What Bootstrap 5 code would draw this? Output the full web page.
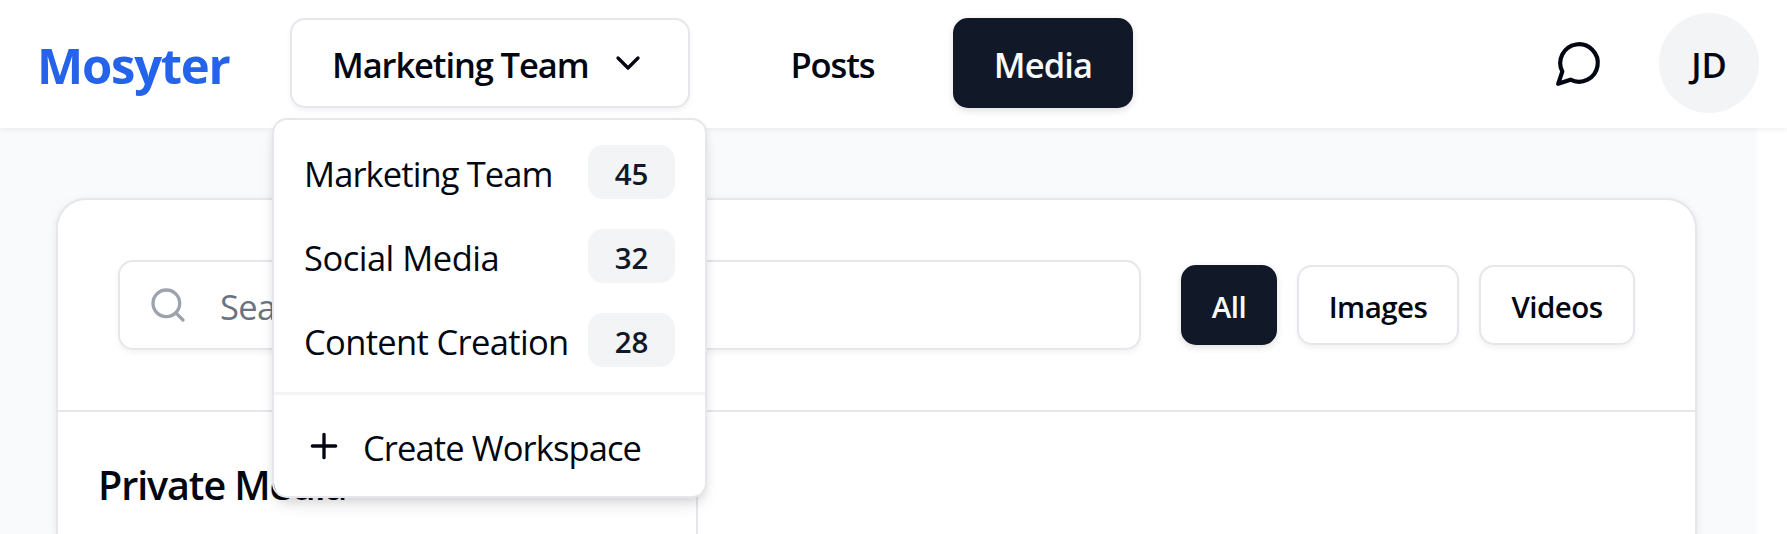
<!DOCTYPE html>
<html lang="en">
<head>
<meta charset="utf-8">
<title>Mosyter</title>
<meta name="viewport" content="width=device-width, initial-scale=1">
<link href="https://cdn.jsdelivr.net/npm/bootstrap@5.3.0/dist/css/bootstrap.min.css" rel="stylesheet">
<style>
  :root { --ink: #030712; --navy: #111827; --line: #e5e7eb; --soft: #f3f4f6; --page: #f9fafb; }
  body { font-family: "Open Sans", "Noto Sans", sans-serif; font-size: 34.5px; line-height: 50px; color: var(--ink); background: #fff; overflow: hidden; height: 534px; }
  svg { fill: none; stroke: currentColor; stroke-width: 2; stroke-linecap: round; stroke-linejoin: round; flex: none; display: block; }
  .topbar { height: 128px; padding: 0 28px 2px 37px; background: #fff; box-shadow: 0 2.5px 5px rgba(0,0,0,.05); position: relative; z-index: 5; }
  .topbar .navbar-brand { font-size: 49px; font-weight: 700; color: #2563eb; width: 253px; margin: 0; padding: 3px 0 0; line-height: 60px; letter-spacing: -1.25px; }
  .ui-btn { --bs-btn-color: var(--ink); --bs-btn-border-color: transparent; --bs-btn-border-width: 2px; --bs-btn-border-radius: 15px; --bs-btn-font-size: 34.5px; --bs-btn-line-height: 50px; --bs-btn-font-weight: 600; --bs-btn-padding-x: 0; --bs-btn-padding-y: 0; height: 90px; display: flex; align-items: center; justify-content: center; white-space: nowrap; letter-spacing: -1.1px; }
  .ui-btn .label { padding-top: 4px; }
  .ui-outline { --bs-btn-bg: #fff; --bs-btn-border-color: var(--line); box-shadow: 0 2.5px 5px rgba(0,0,0,.05); }
  .ui-solid { --bs-btn-bg: var(--navy); --bs-btn-color: #f9fafb; --bs-btn-border-color: var(--navy); box-shadow: 0 2.5px 7px rgba(0,0,0,.12); }
  .ui-small { --bs-btn-font-size: 29.5px; height: 80px; letter-spacing: -.55px; }
  .trigger { width: 400px; justify-content: flex-start; padding-left: 40px; }
  .trigger .label { width: 276px; text-align: left; }
  .posts { width: 163px; margin-left: 61px; }
  .media { width: 180px; margin-left: 39px; letter-spacing: -.9px; }
  .avatar { width: 100px; height: 100px; background: var(--soft); font-weight: 600; margin-left: 55px; padding-top: 3px; }
  .ws-menu { top: 118px; left: 272px; width: 435px; height: 380px; border: 2px solid var(--line); border-radius: 15px; padding: 11px 0 0; font-size: inherit; color: inherit; box-shadow: 0 10px 15px -3px rgba(0,0,0,.1), 0 4px 10px -2px rgba(0,0,0,.1); z-index: 10; }
  .ws-menu .dropdown-item { height: 84px; padding: 0 30px 2px; color: var(--ink); letter-spacing: -.9px; }
  .ws-menu .social { letter-spacing: -.5px; }
  .ws-menu .content-team { letter-spacing: -.65px; }
  .ws-menu .label { padding-top: 3px; }
  .ws-menu .create .label { margin-left: 19px; }
  .ws-menu .dropdown-divider { margin: 9px 0 10px; border-top: 3px solid var(--soft); }
  .count { width: 87px; height: 54px; border-radius: 15px; background: var(--soft); color: var(--navy); font-size: 29.5px; font-weight: 600; line-height: 57px; letter-spacing: 0; }
  .page-area { width: 1757px; height: 406px; background: var(--page); padding: 70px 60px 0 56px; }
  .panel { height: 336px; background: #fff; border: 2px solid var(--line); border-bottom: 0; border-radius: 30px 30px 0 0; box-shadow: 0 2.5px 8px rgba(0,0,0,.08); }
  .tools { height: 212px; border-bottom: 2px solid var(--line); padding: 0 60px; }
  .search { width: 1023px; height: 90px; border: 2px solid var(--line); border-radius: 15px; padding-left: 28px; box-shadow: 0 2.5px 5px rgba(0,0,0,.05); color: #6b7280; margin-right: 40px; letter-spacing: -.7px; }
  .search .label { padding-top: 4px; }
  .search svg { color: #9ca3af; margin-right: 32px; }
  .filters { gap: 20px; }
  .f-all { width: 96px; }
  .f-images { width: 162px; }
  .f-videos { width: 156px; }
  .side { width: 640px; height: 122px; border-right: 2px solid var(--line); padding: 48px 0 0 40px; font-size: 39.5px; font-weight: 600; letter-spacing: -1.1px; }
</style>
</head>
<body>
<nav class="topbar d-flex align-items-center">
  <a class="navbar-brand" href="#">Mosyter</a>
  <button class="btn ui-btn ui-outline trigger" type="button"><span class="label">Marketing Team</span>
    <svg width="40" height="40" viewBox="0 0 24 24"><path d="m6 9 6 6 6-6"/></svg>
  </button>
  <button class="btn ui-btn posts" type="button"><span class="label">Posts</span></button>
  <button class="btn ui-btn ui-solid media" type="button"><span class="label">Media</span></button>
  <svg class="ms-auto" width="50" height="50" viewBox="0 0 24 24"><path d="M7.9 20A9 9 0 1 0 4 16.1L2 22Z"/></svg>
  <div class="avatar rounded-circle d-flex align-items-center justify-content-center">JD</div>
</nav>

<div class="dropdown-menu show ws-menu">
  <a class="dropdown-item d-flex align-items-center justify-content-between" href="#"><span class="label">Marketing Team</span><span class="count text-center">45</span></a>
  <a class="dropdown-item social d-flex align-items-center justify-content-between" href="#"><span class="label">Social Media</span><span class="count text-center">32</span></a>
  <a class="dropdown-item content-team d-flex align-items-center justify-content-between" href="#"><span class="label">Content Creation</span><span class="count text-center">28</span></a>
  <div class="dropdown-divider"></div>
  <a class="dropdown-item create d-flex align-items-center" href="#">
    <svg width="40" height="40" viewBox="0 0 24 24"><path d="M5 12h14M12 5v14"/></svg><span class="label">Create Workspace</span></a>
</div>

<main class="page-area">
  <section class="panel">
    <div class="tools d-flex align-items-center">
      <div class="search d-flex align-items-center">
        <svg width="40" height="40" viewBox="0 0 24 24"><circle cx="11" cy="11" r="8"/><path d="m21 21-4.3-4.3"/></svg>
        <span class="label">Search</span>
      </div>
      <div class="filters d-flex">
        <button class="btn ui-btn ui-solid ui-small f-all" type="button"><span class="label">All</span></button>
        <button class="btn ui-btn ui-outline ui-small f-images" type="button"><span class="label">Images</span></button>
        <button class="btn ui-btn ui-outline ui-small f-videos" type="button"><span class="label">Videos</span></button>
      </div>
    </div>
    <div class="side">Private Media</div>
  </section>
</main>
<script src="https://cdn.jsdelivr.net/npm/bootstrap@5.3.0/dist/js/bootstrap.bundle.min.js"></script>
</body>
</html>
